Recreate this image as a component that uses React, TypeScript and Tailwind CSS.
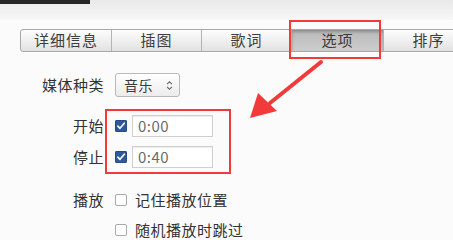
const tabs = [
  { label: "详细信息", w: "w-[90px]" },
  { label: "插图", w: "w-[90px]" },
  { label: "歌词", w: "w-[90px]" },
  { label: "选项", w: "w-[92px]", active: true },
  { label: "排序", w: "w-[90px]" },
];

function CheckBox({ checked }: { checked?: boolean }) {
  if (checked) {
    return (
      <span className="flex h-[12px] w-[12px] items-center justify-center rounded-[2px] bg-[#30589c] shadow-[inset_0_0_0_1px_#274a85]">
        <svg viewBox="0 0 12 12" className="h-[10px] w-[10px]">
          <path d="M2.2 6.2 L4.8 8.8 L10 2.6" fill="none" stroke="#fff" strokeWidth="1.9" strokeLinecap="round" strokeLinejoin="round" />
        </svg>
      </span>
    );
  }
  return <span className="block h-[12px] w-[12px] rounded-[2px] border border-[#a9a9a9] bg-white" />;
}

function TimeField({ value }: { value: string }) {
  return (
    <div className="flex h-[22px] w-[81px] items-center border border-[#cfcfcf] bg-white pl-[5px] text-[15px] text-[#6a6a6a] shadow-[inset_0_1px_1px_rgba(0,0,0,0.08)]">
      {value}
    </div>
  );
}

export default function App() {
  return (
    <div className="relative h-[240px] w-[453px] overflow-hidden bg-[#fbfbfb] font-['Noto_Sans_CJK_SC','Noto_Sans',sans-serif] text-[#333]">
      {/* window chrome remnant */}
      <div className="h-[20px] bg-gradient-to-b from-[#e9e9e9] to-[#f7f7f7]">
        <div className="h-[4px] w-[90px] bg-[#262626]" />
      </div>

      {/* segmented tabs */}
      <div className="ml-[20px] mt-[9px] flex h-[23px] w-[500px] rounded-l-[3px] border border-[#a8a8a8] bg-gradient-to-b from-[#fdfdfd] to-[#e2e2e2] shadow-[0_1px_0_rgba(255,255,255,0.9)]">
        {tabs.map((t, i) => (
          <div
            key={t.label}
            className={`flex h-full ${t.w} shrink-0 items-center justify-center text-[15px] tracking-[1px] ${
              i > 0 ? "border-l border-[#b4b4b4]" : ""
            } ${t.active ? "bg-gradient-to-b from-[#b9b9b9] to-[#cdcdcd] text-[#3a3a3a] shadow-[inset_0_2px_3px_rgba(0,0,0,0.25)]" : "text-[#3d3d3d]"}`}
          >
            {t.label}
          </div>
        ))}
      </div>

      {/* form */}
      <div className="mt-[21px] grid grid-cols-[104px_1fr] items-center gap-x-[11px] text-[15px] tracking-[0.5px]">
        <span className="text-right">媒体种类</span>
        <div className="flex h-[24px] w-[65px] items-center justify-between rounded-[3px] border border-[#b9b9b9] bg-gradient-to-b from-[#ffffff] to-[#ececec] pl-[8px] pr-[6px] text-[14px] text-[#3a3a3a]">
          <span>音乐</span>
          <svg viewBox="0 0 8 12" className="h-[11px] w-[7px]">
            <path d="M1.2 4.5 L4 1.8 L6.8 4.5 M1.2 7.5 L4 10.2 L6.8 7.5" fill="none" stroke="#666" strokeWidth="1.2" />
          </svg>
        </div>

        <span className="mt-[18px] text-right">开始</span>
        <div className="mt-[18px] flex items-center gap-[5px]">
          <CheckBox checked />
          <TimeField value="0:00" />
        </div>

        <span className="mt-[8px] text-right">停止</span>
        <div className="mt-[8px] flex items-center gap-[5px]">
          <CheckBox checked />
          <TimeField value="0:40" />
        </div>

        <span className="mt-[21px] text-right">播放</span>
        <div className="mt-[21px] flex items-center gap-[8px]">
          <CheckBox />
          <span>记住播放位置</span>
        </div>

        <span className="mt-[7px]" />
        <div className="mt-[7px] flex items-center gap-[8px]">
          <CheckBox />
          <span>随机播放时跳过</span>
        </div>
      </div>

      {/* annotations */}
      <div className="pointer-events-none absolute left-[289px] top-[20px] h-[39px] w-[92px] border-[2.5px] border-[#f23a3a]" />
      <div className="pointer-events-none absolute left-[105px] top-[109px] h-[65px] w-[126px] border-[2.5px] border-[#f23a3a]" />
      <svg className="pointer-events-none absolute left-0 top-0" width="453" height="240" viewBox="0 0 453 240">
        <path d="M321 62 L270 103" stroke="#f23a3a" strokeWidth="4" strokeLinecap="round" />
        <path d="M250 118 L258 93 L277 111 Z" fill="#f23a3a" />
      </svg>
    </div>
  );
}
